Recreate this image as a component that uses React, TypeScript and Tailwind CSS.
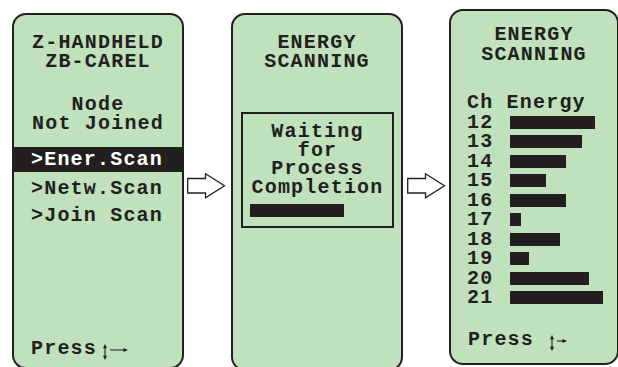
const ink = "#231f20";

function FlowArrow() {
  return (
    <svg width="39" height="26" viewBox="0 0 39 26" className="block">
      <path
        d="M0.7 5.5 H18.5 V0.8 L37.5 12.8 L18.5 24.8 V20 H0.7 Z"
        fill="#fff"
        stroke={ink}
        strokeWidth="1.3"
        strokeLinejoin="miter"
      />
    </svg>
  );
}

function PressKeys({ arrowEnd }: { arrowEnd: number }) {
  return (
    <svg
      width={arrowEnd + 1}
      height="16"
      viewBox={`0 0 ${arrowEnd + 1} 16`}
      className="inline-block align-[-6px]"
    >
      <line x1="3" y1="2" x2="3" y2="14" stroke={ink} strokeWidth="1.1" />
      <polygon points="1,4.2 3,0 5,4.2" fill={ink} />
      <polygon points="1,11.8 3,16 5,11.8" fill={ink} />
      <line x1="8" y1="6" x2={arrowEnd - 3} y2="6" stroke={ink} strokeWidth="1.1" />
      <polygon points={`${arrowEnd - 4.5},4 ${arrowEnd},6 ${arrowEnd - 4.5},8`} fill={ink} />
    </svg>
  );
}

const bars = [
  { ch: 12, w: 85 },
  { ch: 13, w: 72 },
  { ch: 14, w: 56 },
  { ch: 15, w: 36 },
  { ch: 16, w: 56 },
  { ch: 17, w: 11 },
  { ch: 18, w: 50 },
  { ch: 19, w: 19 },
  { ch: 20, w: 79 },
  { ch: 21, w: 93 },
];

export default function App() {
  return (
    <div className="w-[618px] h-[367px] overflow-hidden bg-white flex items-start pl-[12px] font-['Liberation_Mono',monospace] font-bold text-[20px] tracking-[1.2px] text-[#231f20]">
      {/* main menu */}
      <div className="mt-[13px] w-[172px] h-[356px] shrink-0 rounded-[14px] border-2 border-[#231f20] bg-[#bfe1bb] flex flex-col overflow-hidden">
        <div className="pt-[18px] text-center leading-[19px]">
          <div>Z-HANDHELD</div>
          <div>ZB-CAREL</div>
        </div>
        <div className="mt-[24px] text-center leading-[19px]">
          <div>Node</div>
          <div>Not Joined</div>
        </div>
        <div className="mt-[14px]">
          <div className="h-[25px] leading-[26px] bg-[#231f20] text-white pl-[17px]">&gt;Ener.Scan</div>
          <div className="mt-[3px] leading-[27px] pl-[17px]">&gt;Netw.Scan</div>
          <div className="leading-[27px] pl-[17px]">&gt;Join Scan</div>
        </div>
        <div className="mt-auto pb-[7px] pl-[17px] leading-[19px] whitespace-nowrap">
          Press
          <span className="ml-[5px]">
            <PressKeys arrowEnd={26} />
          </span>
        </div>
      </div>

      <div className="mt-[173px] ml-[3px] mr-[5px] shrink-0">
        <FlowArrow />
      </div>

      {/* scanning in progress */}
      <div className="mt-[13px] w-[172px] h-[358px] shrink-0 rounded-[14px] border-2 border-[#231f20] bg-[#bfe1bb] flex flex-col">
        <div className="pt-[18px] text-center leading-[19px]">
          <div>ENERGY</div>
          <div>SCANNING</div>
        </div>
        <div className="mt-[41px] ml-[8px] mr-[7px] border-2 border-[#231f20] pt-[9px] pb-[9px]">
          <div className="text-center leading-[18.5px]">
            <div>Waiting</div>
            <div>for</div>
            <div>Process</div>
            <div>Completion</div>
          </div>
          <div className="mt-[7px] ml-[7px] w-[94px] h-[13px] bg-[#231f20]" />
        </div>
      </div>

      <div className="mt-[173px] ml-[4px] mr-[3px] shrink-0">
        <FlowArrow />
      </div>

      {/* scan results */}
      <div className="mt-[9px] w-[170px] h-[356px] shrink-0 rounded-[14px] border-2 border-[#231f20] bg-[#bfe1bb] flex flex-col">
        <div className="pt-[14px] text-center leading-[20px]">
          <div>ENERGY</div>
          <div>SCANNING</div>
        </div>
        <div className="mt-[28px] pl-[16px] leading-[19.5px]">
          <div className="whitespace-pre">Ch Energy</div>
          {bars.map((b) => (
            <div key={b.ch} className="flex items-center">
              <span className="w-[43px] shrink-0">{b.ch}</span>
              <div className="h-[13px] bg-[#231f20]" style={{ width: b.w }} />
            </div>
          ))}
        </div>
        <div className="mt-auto pb-[12px] pl-[17px] leading-[19px] whitespace-nowrap">
          Press
          <span className="ml-[15px]">
            <PressKeys arrowEnd={18} />
          </span>
        </div>
      </div>
    </div>
  );
}
